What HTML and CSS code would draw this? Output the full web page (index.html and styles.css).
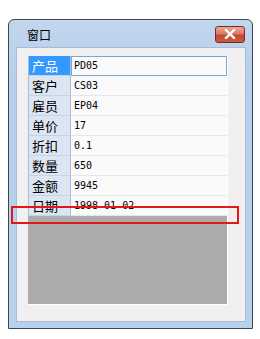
FILE: index.html
```html
<!DOCTYPE html>
<html>
  <head>
    <title>窗口</title>
    <meta charset="UTF-8" />
    <link rel="stylesheet" href="styles.css">
  </head>
  <body>
    <div class="window">
      <div class="titlebar">
        <span class="title">窗口</span>
        <button class="close">
          <svg width="12" height="10" viewBox="0 0 12 10">
            <path d="M2 1 L10 9 M10 1 L2 9" stroke="#fff" stroke-width="2.4" stroke-linecap="square"/>
          </svg>
        </button>
      </div>
      <div class="client">
        <div class="grid">
          <div class="row">
            <div class="head selected">产品</div>
            <div class="cell focus">PD05</div>
          </div>
          <div class="row">
            <div class="head">客户</div>
            <div class="cell">CS03</div>
          </div>
          <div class="row">
            <div class="head">雇员</div>
            <div class="cell">EP04</div>
          </div>
          <div class="row">
            <div class="head">单价</div>
            <div class="cell">17</div>
          </div>
          <div class="row">
            <div class="head">折扣</div>
            <div class="cell">0.1</div>
          </div>
          <div class="row">
            <div class="head">数量</div>
            <div class="cell">650</div>
          </div>
          <div class="row">
            <div class="head">金额</div>
            <div class="cell">9945</div>
          </div>
          <div class="row">
            <div class="head">日期</div>
            <div class="cell">1998-01-02</div>
          </div>
        </div>
      </div>
    </div>
    <div class="mark"></div>
  </body>
</html>
```

FILE: styles.css
```css
*{
    margin: 0;
    padding: 0;
    box-sizing: border-box;
}
body{
    background: #fff;
    font-family: "Noto Sans CJK SC", sans-serif;
}
.window{
    margin: 19px 0 0 8px;
    width: 245px;
    height: 310px;
    border: 1px solid #3c4650;
    border-radius: 6px 6px 0 0;
    background: linear-gradient(#c2d6ee, #b6cfea 60px, #b9d2ec);
    padding: 0 6px 6px 7px;
    display: flex;
    flex-direction: column;
}
.titlebar{
    height: 28px;
    display: flex;
    align-items: center;
    justify-content: space-between;
    padding-left: 11px;
    padding-right: 1px;
}
.title{
    font-size: 12px;
    color: #000;
    line-height: 12px;
    margin-top: 2px;
}
.close{
    width: 30px;
    height: 17px;
    margin-top: 1px;
    border: 1px solid #7b2a20;
    border-radius: 3px;
    background: linear-gradient(#e9a99b, #d87a66 45%, #c04a34 55%, #c95a42);
    display: flex;
    justify-content: center;
    align-items: center;
}
.client{
    flex: 1;
    background: #f0f0f0;
    border: 1px solid #a6bcd8;
    padding: 8px 17px 16px 11px;
}
.grid{
    height: 249px;
    background: #ababab;
    border-right: 1px solid #fff;
    border-bottom: 1px solid #fff;
}
.row{
    display: flex;
    height: 20px;
}
.head{
    width: 43px;
    background: #dce6f3;
    border-left: 1px solid #a9bcd4;
    border-right: 1px solid #a9bcd4;
    border-bottom: 1px solid #c5d3e5;
    font-size: 13px;
    line-height: 19px;
    padding-left: 3px;
    color: #000;
}
.head.selected{
    background: #3399ff;
    color: #fff;
}
.cell{
    flex: 1;
    background: #fafafa;
    border-bottom: 1px solid #e6e6e6;
    font-family: "DejaVu Sans Mono", monospace;
    font-size: 10px;
    line-height: 19px;
    padding-left: 3px;
    color: #000;
}
.cell.focus{
    border: 1px solid #7ea6d4;
    line-height: 17px;
    padding-left: 2px;
}
.mark{
    position: absolute;
    left: 11px;
    top: 206px;
    width: 228px;
    height: 18px;
    border: 2px solid #e01818;
}
```
